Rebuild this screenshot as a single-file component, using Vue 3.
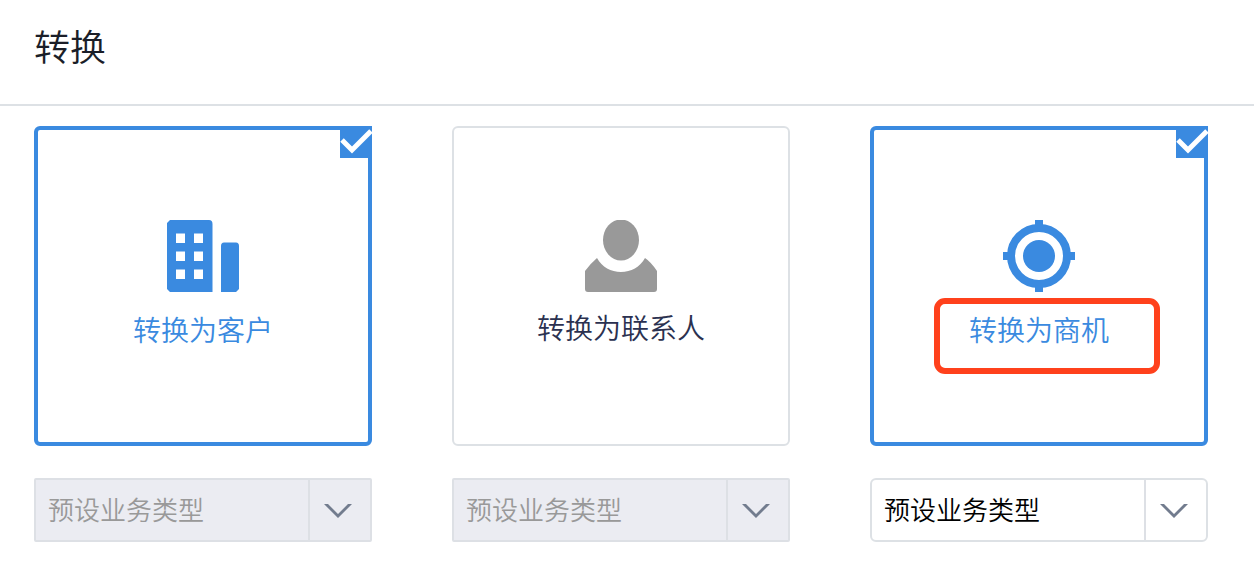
<script setup>
import { ref } from 'vue'

const options = ref([
  { id: 'account', label: '转换为客户', selected: true, disabled: true, type: 'preset', marked: false },
  { id: 'contact', label: '转换为联系人', selected: false, disabled: true, type: 'preset', marked: false },
  { id: 'deal', label: '转换为商机', selected: true, disabled: false, type: 'preset', marked: true }
])
</script>

<template>
  <main class="convert">
    <header class="header">
      <h1 class="title">转换</h1>
    </header>
    <div class="options">
      <section v-for="o in options" :key="o.id" class="option">
        <button
          type="button"
          class="card"
          :class="{ selected: o.selected }"
          :aria-pressed="o.selected"
          @click="o.selected = !o.selected"
        >
          <svg v-if="o.id === 'account'" class="icon" viewBox="0 0 72 72" aria-hidden="true">
            <path
              fill-rule="evenodd"
              d="M3 0H42Q45.500 0 45.500 4V72H3L0 69V3ZM9 13.500V23H18V13.500ZM27 13.500V23H36V13.500ZM9 31.500V41H18V31.500ZM27 31.500V41H36V31.500ZM9 49.500V59H18V49.500ZM27 49.500V59H36V49.500ZM54 72V26Q54 22.500 57 22.500H69Q72 22.500 72 26V69L69 72Z"
            />
          </svg>
          <svg v-else-if="o.id === 'contact'" class="icon" viewBox="0 0 72 72" aria-hidden="true">
            <ellipse cx="36" cy="20" rx="18" ry="20.500" />
            <path d="M12 38C17 47 26 52 36 52S55 47 60 38Q66 42 72 51V69Q72 72 69 72H3Q0 72 0 69V51Q6 43 12 38Z" />
          </svg>
          <svg v-else class="icon" viewBox="0 0 72 72" aria-hidden="true">
            <circle cx="36" cy="36" r="16" />
            <circle class="ring" cx="36" cy="36" r="28" />
            <path d="M32 0H40V8H32ZM32 64H40V72H32ZM0 32H8V40H0ZM64 32H72V40H64Z" />
          </svg>
          <span class="label">{{ o.label }}</span>
          <span v-if="o.selected" class="tick">
            <svg viewBox="0 0 32 32" aria-hidden="true"><path d="M2 14L12 24L31 5" /></svg>
          </span>
          <span v-if="o.marked" class="mark"></span>
        </button>
        <div class="picker" :class="{ disabled: o.disabled }">
          <select v-model="o.type" :disabled="o.disabled" :aria-label="o.label">
            <option value="preset">预设业务类型</option>
          </select>
          <span class="arrow">
            <svg viewBox="0 0 28 16" aria-hidden="true"><path d="M0 2H4L14 12L24 2H28L14 16Z" /></svg>
          </span>
        </div>
      </section>
    </div>
  </main>
</template>

<style>
body {
  margin: 0;
  background: #fff;
}
</style>

<style scoped>
.convert {
  font-family: "Noto Sans CJK SC", sans-serif;
  font-weight: 350;
  color: #1a1e28;
}
.header {
  padding: 18px 34px 32px;
  border-bottom: 2px solid #dde1e5;
}
.title {
  margin: 0;
  font-size: 36px;
  line-height: 54px;
  font-weight: 350;
}
.options {
  display: grid;
  grid-template-columns: repeat(3, minmax(0, 1fr));
  gap: 80px;
  padding: 20px 46px 28px 34px;
}
.option {
  display: flex;
  flex-direction: column;
  gap: 32px;
}
.card {
  position: relative;
  box-sizing: border-box;
  min-height: 320px;
  padding: 92px 16px;
  display: flex;
  flex-direction: column;
  align-items: center;
  gap: 16px;
  border: 2px solid #dde1e5;
  border-radius: 6px;
  background: #fff;
  color: #2b3150;
  font: inherit;
  cursor: pointer;
}
.card.selected {
  padding-top: 90px;
  gap: 18px;
  border: 4px solid #3a8ae0;
  color: #3a8ae0;
}
.icon {
  width: 72px;
  height: 72px;
  fill: #999;
}
.selected .icon {
  fill: #3a8ae0;
}
.icon .ring {
  fill: none;
  stroke: #999;
  stroke-width: 8px;
}
.selected .icon .ring {
  stroke: #3a8ae0;
}
.label {
  font-size: 28px;
  line-height: 38px;
}
.tick {
  position: absolute;
  top: -4px;
  right: -4px;
  width: 32px;
  height: 32px;
  background: #3a8ae0;
}
.tick svg {
  display: block;
  fill: none;
  stroke: #fff;
  stroke-width: 5px;
}
.mark {
  position: absolute;
  top: 168px;
  left: 60px;
  right: 44px;
  height: 76px;
  box-sizing: border-box;
  border: 6px solid #ff411c;
  border-radius: 11px;
}
.picker {
  display: flex;
  position: relative;
  height: 60px;
  border: 2px solid #dde1e5;
  border-radius: 6px;
  background: #fff;
}
.picker.disabled {
  border-radius: 2px;
  border-color: #dde0e5;
  background: #ebecf2;
}
.picker select {
  flex: 1;
  min-width: 0;
  padding: 0 72px 4px 12px;
  border: 0;
  appearance: none;
  background: transparent;
  color: #000;
  font: inherit;
  font-size: 26px;
}
.picker select:disabled {
  color: #999;
  opacity: 1;
}
.arrow {
  position: absolute;
  top: 0;
  right: 0;
  bottom: 0;
  width: 46px;
  display: flex;
  align-items: center;
  padding-left: 14px;
  border-left: 2px solid #dde0e5;
  pointer-events: none;
}
.arrow svg {
  width: 28px;
  height: 16px;
  fill: #727c8e;
}
</style>
